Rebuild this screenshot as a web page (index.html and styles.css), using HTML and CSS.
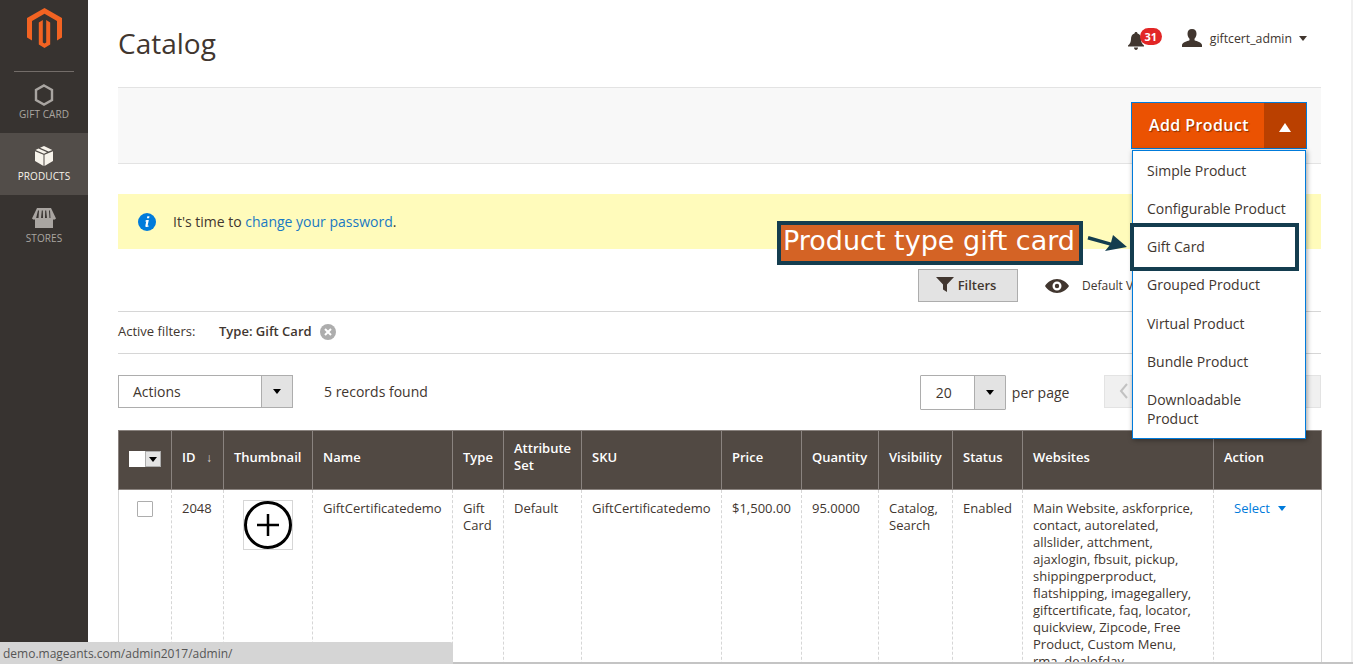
FILE: index.html
```html
<!DOCTYPE html>
<html lang="en">
<head>
<meta charset="utf-8">
<title>Catalog</title>
<link rel="stylesheet" href="styles.css">
</head>
<body>
<div class="app">
  <nav class="sidebar">
    <div class="logo-box">
      <svg class="logo" viewBox="27 8 35 40" width="35" height="40"><path fill="#f26322" d="M44.5 8 62 18v19.500l-5 3V21l-12.500-7.200L32 21v19.500l-5-3V18z"/><path fill="#f26322" d="M38.800 22.500 42.800 20v22.500l1.700 1 1.700-1V20l4 2.500v22L44.500 48l-5.700-3.500z"/></svg>
    </div>
    <a class="nav-item">
      <svg viewBox="0 0 20 22" width="20" height="22"><path fill="none" stroke="#a9a5a1" stroke-width="2.400" d="M10 1.500 18 6v10l-8 4.500L2 16V6z"/></svg>
      <span>GIFT CARD</span>
    </a>
    <a class="nav-item active">
      <svg viewBox="0 0 20 22" width="20" height="22"><path fill="#f7f3eb" d="M9.500 9.800 1 6.200 1 16l8.500 5zM10.500 9.800V21l8.500-5V6.200zM4.500 3.500 1.500 5l8.500 3.700 3-1.400zM6 2.700l8.500 3.900 3.800-1.600L10 1z"/></svg>
      <span>PRODUCTS</span>
    </a>
    <a class="nav-item">
      <svg viewBox="0 0 24 22" width="24" height="22"><path fill="#a9a5a1" d="M3 11h18v10H3z"/><path fill="#a9a5a1" d="M5 1h14l5 10.500c-1 1.500-3 1.500-4 0h-1.500L18 3.500h-1l.500 8h-2.500L14.200 3.500h-1L13 11.500h-2l-.200-8h-1L9 11.500H6.500l.500-8H6L4 11.500c-1 1.500-3 1.500-4 0z"/></svg>
      <span>STORES</span>
    </a>
  </nav>

  <main class="main">
    <header class="page-head">
      <h1 class="title">Catalog</h1>
      <div class="head-tools">
        <div class="bell">
          <svg viewBox="0 0 16 18" width="16" height="18"><path fill="#41362f" d="M8 0c1 0 1.500.700 1.500 1.500C12 2.200 13 4.500 13 7c0 3 1 5 3 6.500v1H0v-1C2 12 3 10 3 7c0-2.500 1-4.800 3.500-5.500C6.500.700 7 0 8 0zM6 15.500h4c0 1.500-1 2.500-2 2.500s-2-1-2-2.500z"/></svg>
          <span class="badge">31</span>
        </div>
        <div class="user">
          <svg viewBox="0 0 20 18" width="20" height="18"><path fill="#41362f" d="M10 0c3 0 4.500 2 4.500 4.800 0 2-.8 3.700-2 4.900v1.500c2.500 1 7 2 7.500 4.800v2H0v-2c.5-2.800 5-3.800 7.500-4.800V9.700c-1.200-1.200-2-2.900-2-4.900C5.500 2 7 0 10 0z"/></svg>
          <span class="user-name">giftcert_admin</span>
          <i class="caret"></i>
        </div>
      </div>
    </header>

    <section class="actions-bar">
      <div class="add-btn">
        <span class="add-label">Add Product</span>
        <span class="add-toggle"><i class="tri-up"></i></span>
      </div>
    </section>

    <section class="notice">
      <svg viewBox="0 0 18 18" width="18" height="18"><circle cx="9" cy="9" r="9" fill="#007bdb"/><path fill="#fff" d="M9.300 3.300h2.200l-.4 2H8.900zM8.500 7h2.300l-1.100 5.300c-.1.500.3.600 1 .2l.2.800c-1.500 1.100-3.900 1.300-3.500-.7l.8-4-.9-.2.100-.6z"/></svg>
      <p class="notice-text">It's time to <a class="link">change your password</a>.</p>
    </section>

    <section class="filter-row">
      <div class="filter-btn">
        <svg viewBox="0 0 18 15" width="18" height="15"><path fill="#41362f" d="M0 0h18l-7 7.500V15l-4-2.500V7.500z"/></svg>
        <span>Filters</span>
      </div>
      <div class="view-btn">
        <svg viewBox="0 0 24 14" width="24" height="14"><path fill="#41362f" d="M12 0c5 0 9.500 3 12 7-2.500 4-7 7-12 7S2.500 11 0 7c2.500-4 7-7 12-7zm0 2.500a4.500 4.500 0 1 0 0 9 4.500 4.500 0 0 0 0-9zm0 2.300a2.200 2.200 0 1 1 0 4.400 2.200 2.200 0 0 1 0-4.400z"/></svg>
        <span>Default View</span>
      </div>
    </section>

    <section class="active-filters">
      <span class="af-label">Active filters:</span>
      <strong class="af-value">Type: Gift Card</strong>
      <svg viewBox="0 0 16 16" width="16" height="16"><circle cx="8" cy="8" r="8" fill="#adadad"/><path stroke="#fff" stroke-width="2" d="M5 5l6 6M11 5l-6 6"/></svg>
    </section>

    <section class="toolbar">
      <div class="select actions-select">
        <span class="select-value">Actions</span>
        <span class="select-arrow"><i class="caret dark"></i></span>
      </div>
      <span class="records">5 records found</span>
      <div class="select page-select">
        <span class="select-value">20</span>
        <span class="select-arrow"><i class="caret dark"></i></span>
      </div>
      <span class="per-page">per page</span>
      <div class="pager">
        <svg viewBox="0 0 10 16" width="10" height="16"><path fill="none" stroke="#c2c2c2" stroke-width="2" d="M8 1 2 8l6 7"/></svg>
      </div>
    </section>

    <table class="grid">
      <colgroup>
        <col class="c-check"><col class="c-id"><col class="c-thumb"><col class="c-name"><col class="c-type"><col class="c-attr"><col class="c-sku"><col class="c-price"><col class="c-qty"><col class="c-vis"><col class="c-status"><col class="c-web"><col class="c-action">
      </colgroup>
      <thead>
        <tr>
          <th><span class="mass"><i class="mass-box"></i><i class="mass-drop"><i class="caret dark small"></i></i></span></th>
          <th><span class="id-head">ID<span class="sort">↓</span></span></th>
          <th>Thumbnail</th>
          <th>Name</th>
          <th>Type</th>
          <th>Attribute Set</th>
          <th>SKU</th>
          <th>Price</th>
          <th>Quantity</th>
          <th>Visibility</th>
          <th>Status</th>
          <th>Websites</th>
          <th>Action</th>
        </tr>
      </thead>
      <tbody>
        <tr>
          <td><i class="row-check"></i></td>
          <td>2048</td>
          <td><span class="thumb"><svg viewBox="0 0 48 48" width="48" height="48"><circle cx="24" cy="24" r="22.500" fill="#fff" stroke="#000" stroke-width="3"/><path stroke="#000" stroke-width="2.500" d="M24 13v22M13 24h22"/></svg></span></td>
          <td>GiftCertificatedemo</td>
          <td>Gift Card</td>
          <td>Default</td>
          <td>GiftCertificatedemo</td>
          <td>$1,500.00</td>
          <td>95.0000</td>
          <td>Catalog, Search</td>
          <td>Enabled</td>
          <td>Main Website, askforprice, contact, autorelated, allslider, attchment, ajaxlogin, fbsuit, pickup, shippingperproduct, flatshipping, imagegallery, giftcertificate, faq, locator, quickview, Zipcode, Free Product, Custom Menu, rma, dealofday</td>
          <td><a class="select-link">Select<i class="caret blue"></i></a></td>
        </tr>
      </tbody>
    </table>
  </main>
  <div class="edge"></div>
</div>

<ul class="menu">
  <li>Simple Product</li>
  <li>Configurable Product</li>
  <li>Gift Card</li>
  <li>Grouped Product</li>
  <li>Virtual Product</li>
  <li>Bundle Product</li>
  <li>Downloadable Product</li>
</ul>

<div class="callout">Product type gift card</div>
<svg class="callout-arrow" viewBox="0 0 42 20" width="42" height="20"><path fill="#143d4f" d="M1.500 3 24 9.500 26 2l14 12-22 4 4.500-5.500L.5 6.500z"/></svg>
<div class="callout-frame"></div>

<div class="status-line"></div>
<div class="status-bar">demo.mageants.com/admin2017/admin/</div>
</body>
</html>
```

FILE: styles.css
```css
* { box-sizing: border-box; }
html, body { margin: 0; height: 100%; overflow: hidden; background: #fff; }
body { font-family: "Open Sans", "Liberation Sans", sans-serif; font-size: 14px; color: #41362f; }
i { display: inline-block; font-style: normal; }

.app { display: flex; height: 664px; overflow: hidden; }
.edge { width: 2px; flex: none; background: #f0f0f0; }

.sidebar { width: 88px; flex: none; background: #373330; display: flex; flex-direction: column; align-items: stretch; }
.logo-box { height: 72px; margin: 0 14px; border-bottom: 1px solid #736d69; display: flex; justify-content: center; align-items: flex-start; padding-top: 8px; }
.nav-item { height: 62px; display: flex; flex-direction: column; align-items: center; justify-content: flex-start; padding-top: 12px; color: #aaa6a0; font-size: 10px; line-height: 14px; gap: 2px; letter-spacing: .08px; }
.nav-item:first-of-type { height: 61px; gap: 1px; }
.nav-item.active { background: #524d49; color: #f7f3eb; }

.main { flex: 1; min-width: 0; padding: 0 30px; }

.page-head { height: 87px; display: flex; justify-content: space-between; align-items: flex-start; }
.title { margin: 23px 0 0; font-size: 28px; line-height: 40px; font-weight: 400; color: #41362f; }
.head-tools { display: flex; align-items: flex-start; padding-top: 28px; padding-right: 14px; }
.bell { position: relative; width: 34px; padding-top: 4px; margin-right: 20px; }
.bell svg { display: block; }
.badge { position: absolute; left: 12px; top: 0; width: 22px; height: 17px; border-radius: 9px; background: #e22626; color: #fff; font-size: 11px; font-weight: 700; line-height: 17px; text-align: center; }
.user { display: flex; align-items: center; height: 20px; font-size: 12.300px; }
.user-name { margin-left: 8px; }
.caret { width: 0; height: 0; border-left: 4.500px solid transparent; border-right: 4.500px solid transparent; border-top: 5px solid #41362f; margin-left: 7px; }
.caret.dark { border-top-color: #000; margin: 0; }
.caret.small { border-left-width: 4px; border-right-width: 4px; }
.caret.blue { border-top-color: #007bdb; margin-left: 8px; vertical-align: 2px; }

.actions-bar { height: 77px; background: #f8f8f8; border-top: 1px solid #e3e3e3; border-bottom: 1px solid #e3e3e3; display: flex; justify-content: flex-end; padding: 14px 14px 0 0; }
.add-btn { width: 176px; height: 47px; border: 1px solid #007bdb; display: flex; background: #eb5202; color: #fff; }
.add-label { flex: 1; font-size: 16px; font-weight: 600; line-height: 45px; padding-left: 17px; letter-spacing: .4px; text-shadow: 1px 1px 1px #8a3000; }
.add-toggle { width: 42px; background: #ba4000; display: flex; align-items: center; justify-content: center; padding-top: 3px; }
.tri-up { width: 0; height: 0; border-left: 6px solid transparent; border-right: 6px solid transparent; border-bottom: 9px solid #fff; }

.notice { margin-top: 30px; height: 55px; background: #fffbbb; display: flex; align-items: center; padding-left: 20px; }
.notice-text { margin: 0 0 0 17px; font-size: 14px; }
.link { color: #1979c3; }

.filter-row { height: 62px; padding-top: 20px; display: flex; align-items: flex-start; }
.filter-btn { margin-left: 800px; width: 100px; height: 33px; background: #e3e3e3; border: 1px solid #adadad; display: flex; align-items: center; justify-content: center; gap: 4px; padding: 0 4px 2px 0; font-size: 13px; font-weight: 600; }
.view-btn { margin-left: 27px; height: 33px; display: flex; align-items: center; gap: 13px; font-size: 12px; white-space: nowrap; }

.active-filters { height: 43px; border-top: 1px solid #d6d6d6; border-bottom: 1px solid #d6d6d6; display: flex; align-items: center; padding-bottom: 3px; font-size: 13px; }
.af-label { width: 101px; }
.af-value { font-weight: 600; margin-right: 9px; }
.active-filters svg { margin: 1px 0 0 -1px; }

.toolbar { margin-top: 21px; display: flex; align-items: flex-start; height: 55px; font-size: 14px; }
.select { height: 33px; border: 1px solid #adadad; display: flex; background: #fff; }
.select-value { flex: 1; line-height: 31px; }
.select-arrow { width: 31px; background: #e3e3e3; border-left: 1px solid #adadad; display: flex; align-items: center; justify-content: center; }
.actions-select { width: 175px; }
.actions-select .select-value { padding-left: 14px; }
.records { margin-left: 31px; line-height: 33px; }
.page-select { margin-left: 492px; width: 86px; height: 35px; border-radius: 1px; }
.page-select .select-value { padding-left: 15px; line-height: 33px; }
.per-page { margin-left: 6px; line-height: 35px; }
.pager { margin-left: 35px; flex: 1; height: 33px; background: #f0f0f0; border: 1px solid #e3e3e3; padding: 7px 0 0 14px; }
.pager svg { display: block; }

.grid { width: 1203px; table-layout: fixed; border-collapse: collapse; font-size: 13px; line-height: 17px; }
.c-check { width: 53px; } .c-id { width: 52px; } .c-thumb { width: 89px; } .c-name { width: 140px; }
.c-type { width: 51px; } .c-attr { width: 78px; } .c-sku { width: 140px; } .c-price { width: 80px; }
.c-qty { width: 77px; } .c-vis { width: 74px; } .c-status { width: 70px; } .c-web { width: 191px; } .c-action { width: 108px; }
.grid th { height: 59px; background: #514943; color: #fff; border: 1px solid #8a837f; padding: 0 10px 6px; text-align: left; font-weight: 600; vertical-align: middle; }
.grid td { border-left: 1px dashed #d6d6d6; border-right: 1px dashed #d6d6d6; padding: 10px 10px; vertical-align: top; }
.grid td:first-child { border-left: 1px solid #d6d6d6; text-align: center; }
.grid td:last-child { border-right: 1px solid #d6d6d6; padding-left: 20px; }
.grid td:nth-child(3) { text-align: center; padding-bottom: 0; }
.mass { display: flex; margin-top: 4px; }
.mass-box { width: 16px; height: 16px; background: #fff; }
.mass-drop { width: 16px; height: 16px; background: #e3e3e3; border: 1px solid #adadad; display: flex; align-items: center; justify-content: center; }
.id-head { display: flex; justify-content: space-between; }
.sort { font-size: 12px; font-weight: 400; color: #d6d6d6; padding-right: 1px; }
.row-check { width: 16px; height: 16px; background: #fff; border: 1px solid #adadad; border-radius: 1px; display: block; margin: 1px auto 0; }
.thumb { display: block; width: 50px; height: 50px; border: 1px solid #d6d6d6; margin: 0 auto; }
.thumb svg { display: block; }
.select-link { color: #007bdb; }

.menu { position: absolute; left: 1132px; top: 150px; width: 174px; height: 289px; margin: 0; padding: .2px 0 0; list-style: none; background: #fff; border: 1px solid #007bdb; box-shadow: 1px 1px 5px rgba(0,0,0,.4); font-size: 14px; line-height: 19px; color: #41362f; }
.menu li { padding: 9.600px 14px; }

.callout { position: absolute; left: 777px; top: 221px; width: 306px; height: 44px; background: #d46325; border: 4px solid #143d4f; color: #fff; font-family: "DejaVu Sans", sans-serif; font-size: 27px; line-height: 32px; padding-left: 2px; white-space: nowrap; }
.callout-arrow { position: absolute; left: 1087px; top: 233px; }
.callout-frame { position: absolute; left: 1130px; top: 223px; width: 169px; height: 48px; border: 4px solid #143d4f; }

.status-line { position: absolute; left: 0; right: 0; top: 662px; height: 2px; background: #c4c4c4; }
.status-bar { position: absolute; left: 0; top: 642px; width: 453px; height: 22px; background: #d5d5d5; border-top-right-radius: 3px; color: #555; font-size: 12px; line-height: 23px; padding-left: 3px; }
```
